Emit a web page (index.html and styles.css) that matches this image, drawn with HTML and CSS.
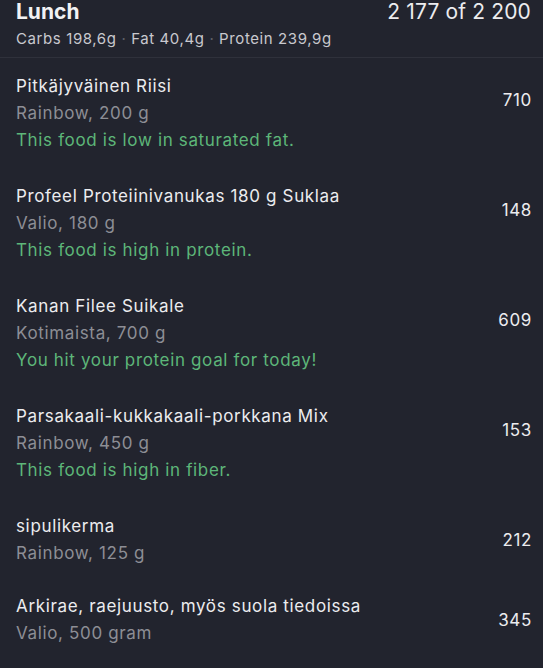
FILE: index.html
```html
<!DOCTYPE html>
<html>
<head>
<meta charset="utf-8">
<link rel="stylesheet" href="styles.css">
</head>
<body>
<div class="meal">
  <header class="meal-head">
    <div class="head-row">
      <span class="meal-title">Lunch</span>
      <span class="meal-total">2 177 of 2 200</span>
    </div>
    <div class="macros">Carbs 198,6g <span class="dot">·</span> Fat 40,4g <span class="dot">·</span> Protein 239,9g</div>
  </header>
  <ul class="foods">
    <li class="food">
      <div class="food-row">
        <div class="food-info">
          <div class="food-name">Pitkäjyväinen Riisi</div>
          <div class="food-sub">Rainbow, 200 g</div>
        </div>
        <div class="food-cal">710</div>
      </div>
      <div class="food-note">This food is low in saturated fat.</div>
    </li>
    <li class="food">
      <div class="food-row">
        <div class="food-info">
          <div class="food-name">Profeel Proteiinivanukas 180 g Suklaa</div>
          <div class="food-sub">Valio, 180 g</div>
        </div>
        <div class="food-cal">148</div>
      </div>
      <div class="food-note">This food is high in protein.</div>
    </li>
    <li class="food">
      <div class="food-row">
        <div class="food-info">
          <div class="food-name">Kanan Filee Suikale</div>
          <div class="food-sub">Kotimaista, 700 g</div>
        </div>
        <div class="food-cal">609</div>
      </div>
      <div class="food-note">You hit your protein goal for today!</div>
    </li>
    <li class="food">
      <div class="food-row">
        <div class="food-info">
          <div class="food-name">Parsakaali-kukkakaali-porkkana Mix</div>
          <div class="food-sub">Rainbow, 450 g</div>
        </div>
        <div class="food-cal">153</div>
      </div>
      <div class="food-note">This food is high in fiber.</div>
    </li>
    <li class="food">
      <div class="food-row">
        <div class="food-info">
          <div class="food-name">sipulikerma</div>
          <div class="food-sub">Rainbow, 125 g</div>
        </div>
        <div class="food-cal">212</div>
      </div>
    </li>
    <li class="food">
      <div class="food-row">
        <div class="food-info">
          <div class="food-name">Arkirae, raejuusto, myös suola tiedoissa</div>
          <div class="food-sub">Valio, 500 gram</div>
        </div>
        <div class="food-cal">345</div>
      </div>
    </li>
  </ul>
</div>
</body>
</html>
```

FILE: styles.css
```css
html, body {
  margin: 0;
  padding: 0;
  background: #22242e;
}
body {
  font-family: Inter, "Noto Sans", "Liberation Sans", sans-serif;
  color: #ececef;
  height: 668px;
  overflow: hidden;
}
.meal-head {
  padding: 0 12px 0 16px;
  height: 58px;
  box-sizing: border-box;
  border-bottom: 1px solid #2f313b;
}
.head-row {
  display: flex;
  justify-content: space-between;
  align-items: baseline;
  line-height: 24px;
}
.meal-title {
  font-size: 21px;
  font-weight: 700;
  color: #f2f2f4;
}
.meal-total {
  font-size: 21px;
  letter-spacing: 0.15px;
  color: #ececef;
}
.macros {
  font-size: 15px;
  letter-spacing: 0.6px;
  line-height: 20px;
  margin-top: 5px;
  color: #c9c9ce;
}
.dot {
  color: #5e6068;
}
.foods {
  list-style: none;
  margin: 0;
  padding: 0;
}
.food {
  padding: 14px 11px 11px 16px;
}
.food-row {
  display: flex;
  align-items: center;
  justify-content: space-between;
}
.food-name,
.food-sub,
.food-note,
.food-cal {
  font-size: 17px;
  letter-spacing: 0.65px;
}
.food-name {
  line-height: 28px;
  color: #ececef;
}
.food-sub {
  line-height: 27px;
  color: #8d8e95;
}
.food-cal {
  color: #ececef;
}
.food-note {
  line-height: 27px;
  color: #5db679;
  margin-bottom: 3px;
}
```
